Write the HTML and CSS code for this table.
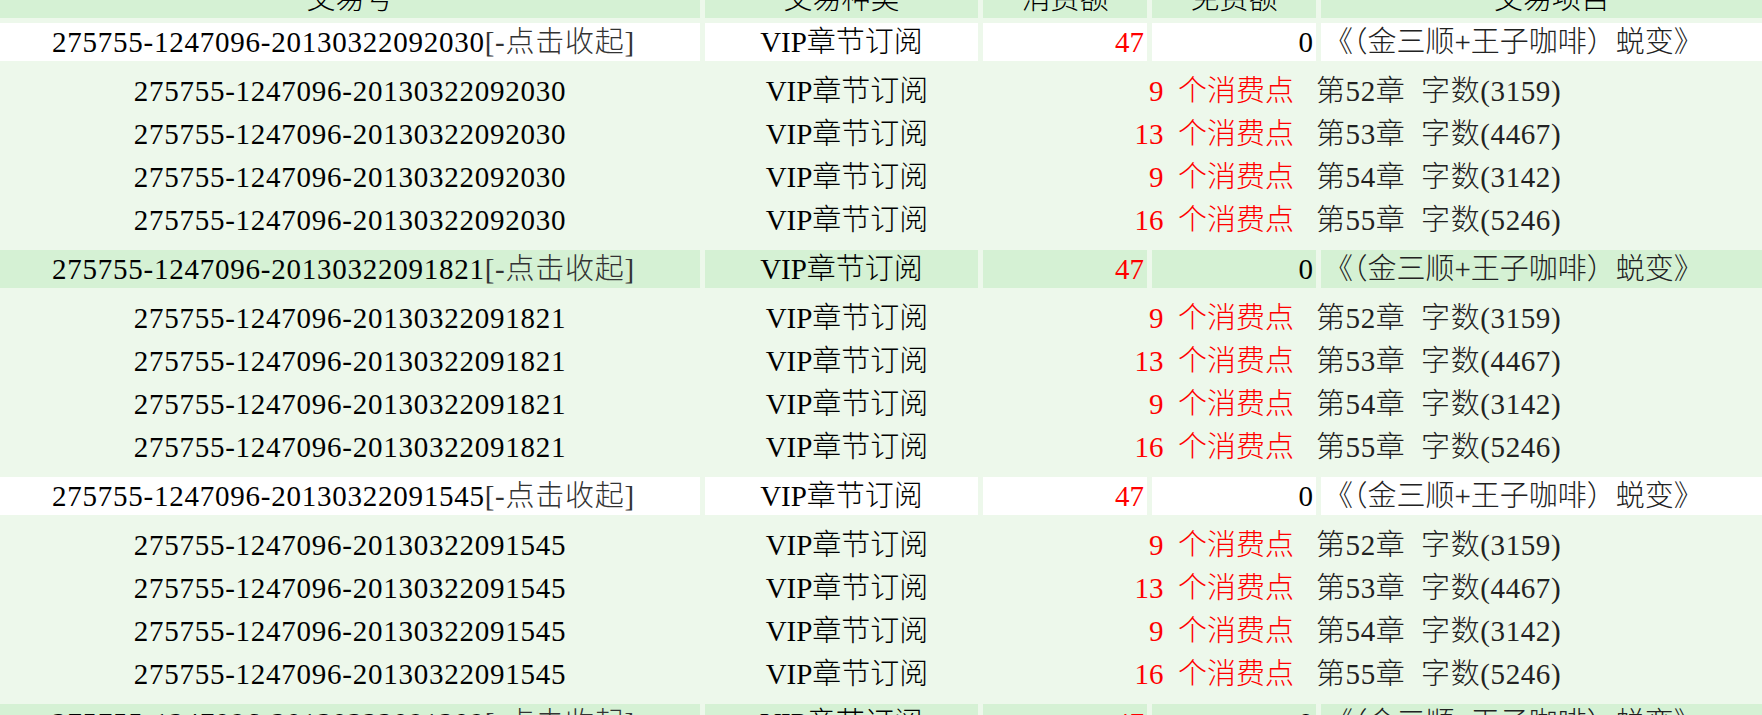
FILE: index.html
```html
<!DOCTYPE html>
<html lang="zh-CN">
<head>
  <meta charset="UTF-8">
  <title>消费记录</title>
  <link rel="stylesheet" href="styles.css">
</head>
<body>
  <table class="trades">
    <colgroup>
      <col class="c-id">
      <col class="c-type">
      <col class="c-pay">
      <col class="c-free">
      <col class="c-item">
    </colgroup>
    <thead>
      <tr>
        <th>交易号</th>
        <th>交易种类</th>
        <th>消费额</th>
        <th>免费额</th>
        <th>交易项目</th>
      </tr>
    </thead>
    <tbody>
      <!-- 2013-03-22 09:20:30 -->
      <tr class="main odd">
        <td class="id">275755-1247096-20130322092030<a class="fold">[-点击收起]</a></td>
        <td class="type">VIP章节订阅</td>
        <td class="pay">47</td>
        <td class="free">0</td>
        <td class="item">《（金三顺+王子咖啡）蜕变》</td>
      </tr>
      <tr class="detail">
        <td colspan="5">
          <table class="items">
            <colgroup>
              <col class="i-id"><col class="i-type"><col class="i-cost"><col>
            </colgroup>
            <tr><td class="id">275755-1247096-20130322092030</td><td class="type">VIP章节订阅</td><td class="cost">9  个消费点</td><td class="chap">第52章  字数(3159)</td></tr>
            <tr><td class="id">275755-1247096-20130322092030</td><td class="type">VIP章节订阅</td><td class="cost">13  个消费点</td><td class="chap">第53章  字数(4467)</td></tr>
            <tr><td class="id">275755-1247096-20130322092030</td><td class="type">VIP章节订阅</td><td class="cost">9  个消费点</td><td class="chap">第54章  字数(3142)</td></tr>
            <tr><td class="id">275755-1247096-20130322092030</td><td class="type">VIP章节订阅</td><td class="cost">16  个消费点</td><td class="chap">第55章  字数(5246)</td></tr>
          </table>
        </td>
      </tr>

      <!-- 2013-03-22 09:18:21 -->
      <tr class="main even">
        <td class="id">275755-1247096-20130322091821<a class="fold">[-点击收起]</a></td>
        <td class="type">VIP章节订阅</td>
        <td class="pay">47</td>
        <td class="free">0</td>
        <td class="item">《（金三顺+王子咖啡）蜕变》</td>
      </tr>
      <tr class="detail">
        <td colspan="5">
          <table class="items">
            <colgroup>
              <col class="i-id"><col class="i-type"><col class="i-cost"><col>
            </colgroup>
            <tr><td class="id">275755-1247096-20130322091821</td><td class="type">VIP章节订阅</td><td class="cost">9  个消费点</td><td class="chap">第52章  字数(3159)</td></tr>
            <tr><td class="id">275755-1247096-20130322091821</td><td class="type">VIP章节订阅</td><td class="cost">13  个消费点</td><td class="chap">第53章  字数(4467)</td></tr>
            <tr><td class="id">275755-1247096-20130322091821</td><td class="type">VIP章节订阅</td><td class="cost">9  个消费点</td><td class="chap">第54章  字数(3142)</td></tr>
            <tr><td class="id">275755-1247096-20130322091821</td><td class="type">VIP章节订阅</td><td class="cost">16  个消费点</td><td class="chap">第55章  字数(5246)</td></tr>
          </table>
        </td>
      </tr>

      <!-- 2013-03-22 09:15:45 -->
      <tr class="main odd">
        <td class="id">275755-1247096-20130322091545<a class="fold">[-点击收起]</a></td>
        <td class="type">VIP章节订阅</td>
        <td class="pay">47</td>
        <td class="free">0</td>
        <td class="item">《（金三顺+王子咖啡）蜕变》</td>
      </tr>
      <tr class="detail">
        <td colspan="5">
          <table class="items">
            <colgroup>
              <col class="i-id"><col class="i-type"><col class="i-cost"><col>
            </colgroup>
            <tr><td class="id">275755-1247096-20130322091545</td><td class="type">VIP章节订阅</td><td class="cost">9  个消费点</td><td class="chap">第52章  字数(3159)</td></tr>
            <tr><td class="id">275755-1247096-20130322091545</td><td class="type">VIP章节订阅</td><td class="cost">13  个消费点</td><td class="chap">第53章  字数(4467)</td></tr>
            <tr><td class="id">275755-1247096-20130322091545</td><td class="type">VIP章节订阅</td><td class="cost">9  个消费点</td><td class="chap">第54章  字数(3142)</td></tr>
            <tr><td class="id">275755-1247096-20130322091545</td><td class="type">VIP章节订阅</td><td class="cost">16  个消费点</td><td class="chap">第55章  字数(5246)</td></tr>
          </table>
        </td>
      </tr>

      <tr class="main even">
        <td class="id">275755-1247096-20130322091209<a class="fold">[-点击收起]</a></td>
        <td class="type">VIP章节订阅</td>
        <td class="pay">47</td>
        <td class="free">0</td>
        <td class="item">《（金三顺+王子咖啡）蜕变》</td>
      </tr>
    </tbody>
  </table>
</body>
</html>
```

FILE: styles.css
```css
html, body {
  margin: 0;
  padding: 0;
  overflow: hidden;
  background: #edf8eb;
}

body {
  font-family: 'Liberation Serif', 'Noto Sans CJK SC', serif;
  font-size: 29px;
  font-weight: 300;
  color: #000;
}

/* page is scrolled a little down and right */
.trades {
  table-layout: fixed;
  width: 1793px;
  margin: -25px 0 0 -5px;
  border-collapse: separate;
  border-spacing: 5px;
  background: #edf8eb;
}

.c-id { width: 700px; }
.c-type { width: 273px; }
.c-pay { width: 164px; }
.c-free { width: 164px; }
.c-item { width: 462px; }

.trades th,
.trades td {
  padding: 0 3px;
  height: 38px;
  line-height: 38px;
  white-space: nowrap;
  overflow: hidden;
}

.trades th {
  background: #d5f1d4;
  font-weight: 300;
  text-align: center;
}

.main.odd td { background: #ffffff; }
.main.even td { background: #d5f1d4; }

.main .id,
.main .type { text-align: center; }

.main .id { letter-spacing: 0.75px; padding-right: 16px; }

.main .pay {
  text-align: right;
  color: #ff0000;
}

.main .free { text-align: right; }

.main .item { text-align: left; color: #222; }

.fold {
  color: #333;
  cursor: pointer;
}

.trades .detail > td {
  padding: 4px 0 3px;
  height: auto;
  line-height: normal;
  background: #edf8eb;
}

.items {
  table-layout: fixed;
  width: 100%;
  border-collapse: collapse;
}

.i-id { width: 700px; }
.i-type { width: 294px; }
.i-cost { width: 300px; }

.trades .items td {
  height: 43px;
  line-height: 43px;
  padding: 0;
  white-space: pre;
}

.items .id,
.items .type { text-align: center; }

.items .id { letter-spacing: 0.75px; }

.items .cost {
  text-align: right;
  padding-right: 3px;
  color: #ff0000;
}

.trades .items .chap {
  padding-left: 22px;
  letter-spacing: 0.6px;
  color: #222;
}
```
